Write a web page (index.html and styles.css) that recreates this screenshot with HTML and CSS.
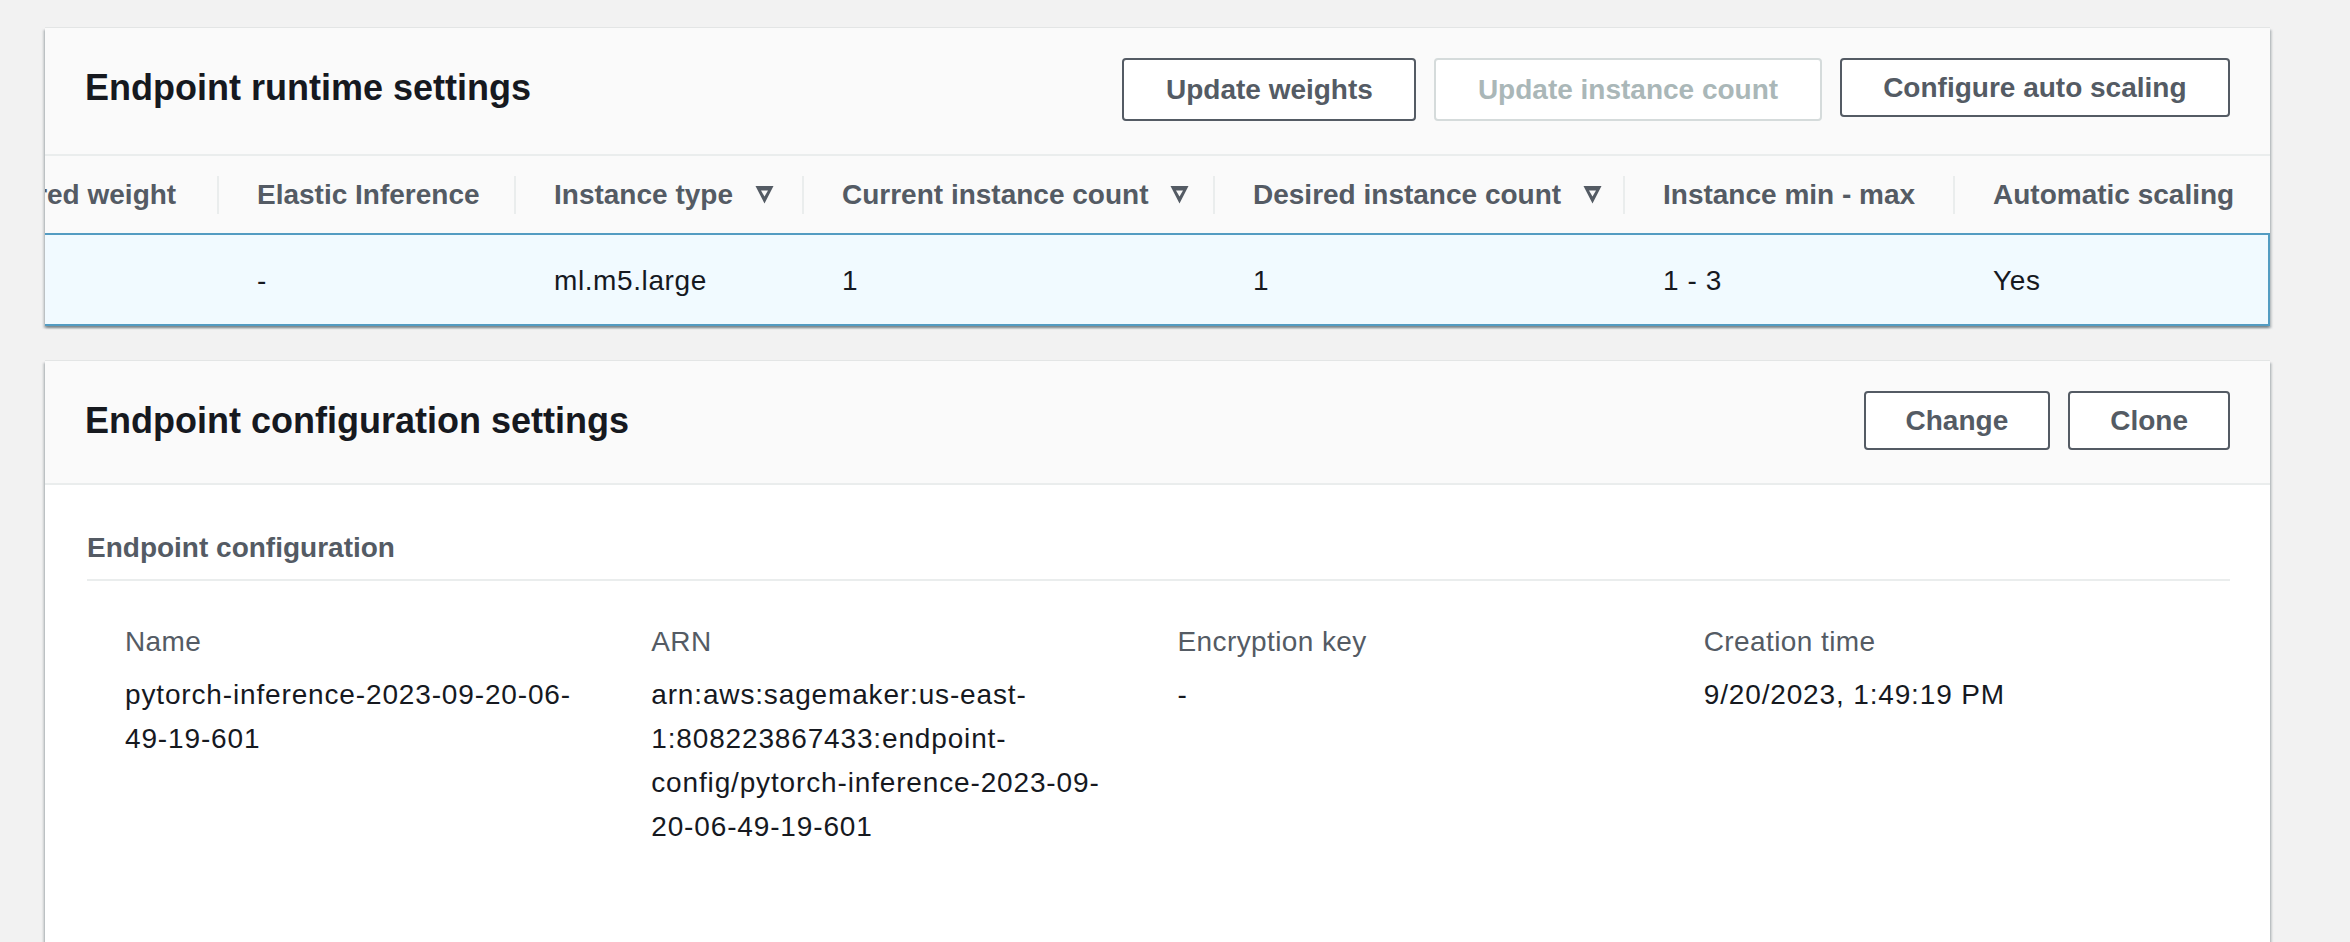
FILE: index.html
```html
<!DOCTYPE html>
<html lang="en">
<head>
<meta charset="utf-8">
<title>Endpoint settings</title>
<link rel="stylesheet" href="styles.css">
</head>
<body>
<div class="page">
  <section class="card">
    <header class="card-head">
      <h2 class="card-title">Endpoint runtime settings</h2>
      <div class="actions actions-wide">
        <button class="btn btn-tall" type="button">Update weights</button>
        <button class="btn btn-tall" type="button" disabled>Update instance count</button>
        <button class="btn" type="button">Configure auto scaling</button>
      </div>
    </header>
    <div class="table-scroll">
      <div class="table">
        <div class="thead">
          <div class="th first">Desired weight</div>
          <div class="th">Elastic Inference</div>
          <div class="th">Instance type
            <svg class="sort" viewBox="0 0 19 19" width="19" height="19" aria-hidden="true"><path fill-rule="evenodd" d="M0.5 1H18.5L9.5 18.5Z M6 5.5H13L9.5 11.5Z"/></svg>
          </div>
          <div class="th">Current instance count
            <svg class="sort" viewBox="0 0 19 19" width="19" height="19" aria-hidden="true"><path fill-rule="evenodd" d="M0.5 1H18.5L9.5 18.5Z M6 5.5H13L9.5 11.5Z"/></svg>
          </div>
          <div class="th">Desired instance count
            <svg class="sort" viewBox="0 0 19 19" width="19" height="19" aria-hidden="true"><path fill-rule="evenodd" d="M0.5 1H18.5L9.5 18.5Z M6 5.5H13L9.5 11.5Z"/></svg>
          </div>
          <div class="th">Instance min - max</div>
          <div class="th">Automatic scaling</div>
        </div>
        <div class="trow">
          <div class="td"></div>
          <div class="td">-</div>
          <div class="td">ml.m5.large</div>
          <div class="td">1</div>
          <div class="td">1</div>
          <div class="td">1 - 3</div>
          <div class="td">Yes</div>
        </div>
      </div>
    </div>
  </section>

  <section class="card card-config">
    <header class="card-head">
      <h2 class="card-title">Endpoint configuration settings</h2>
      <div class="actions">
        <button class="btn" type="button">Change</button>
        <button class="btn" type="button">Clone</button>
      </div>
    </header>
    <div class="card-body">
      <h3 class="sub-title">Endpoint configuration</h3>
      <div class="kv-grid">
        <div class="kv">
          <div class="kv-label">Name</div>
          <div class="kv-value">pytorch-inference-<wbr>2023-<wbr>09-<wbr>20-<wbr>06-<wbr>49-<wbr>19-<wbr>601</div>
        </div>
        <div class="kv">
          <div class="kv-label">ARN</div>
          <div class="kv-value">arn:aws:sagemaker:us-east-<wbr>1:808223867433:endpoint-<wbr>config/pytorch-<wbr>inference-<wbr>2023-<wbr>09-<wbr>20-<wbr>06-<wbr>49-<wbr>19-<wbr>601</div>
        </div>
        <div class="kv">
          <div class="kv-label">Encryption key</div>
          <div class="kv-value">-</div>
        </div>
        <div class="kv">
          <div class="kv-label">Creation time</div>
          <div class="kv-value">9/20/2023, 1:49:19 PM</div>
        </div>
      </div>
    </div>
  </section>
</div>
</body>
</html>
```

FILE: styles.css
```css
* {
  box-sizing: border-box;
}

html, body {
  margin: 0;
  padding: 0;
  background: #f2f2f2;
  font-family: "Liberation Sans", Arial, sans-serif;
  font-size: 28px;
  line-height: 44px;
  color: #16191f;
  overflow: hidden;
}

.page {
  width: 2225px;
  margin-left: 45px;
  padding-top: 28px;
}

.card {
  background: #ffffff;
  box-shadow: 0 2px 2px 0 rgba(0, 28, 36, 0.3),
              2px 2px 2px 0 rgba(0, 28, 36, 0.15),
              -2px 2px 2px 0 rgba(0, 28, 36, 0.15),
              0 -1px 0 0 rgba(0, 28, 36, 0.06);
}

.card-config {
  margin-top: 35px;
}

.card-head {
  display: flex;
  justify-content: space-between;
  align-items: flex-start;
  padding: 30px 40px 33px 40px;
  background: #fafafa;
  border-bottom: 2px solid #eaeded;
}

.card-title {
  margin: 8px 0 0 0;
  font-size: 36px;
  line-height: 44px;
  font-weight: 700;
  color: #16191f;
}

.actions {
  display: flex;
  align-items: flex-start;
  gap: 18px;
}

.btn {
  height: 59px;
  padding: 0 40px;
  border: 2px solid #545b64;
  border-radius: 4px;
  background: #ffffff;
  font-family: "Liberation Sans", Arial, sans-serif;
  font-size: 28px;
  font-weight: 700;
  color: #545b64;
  cursor: pointer;
}

.actions-wide .btn {
  padding: 0 41.5px;
}

.btn-tall {
  height: 63px;
}

.btn:disabled {
  border-color: #d5dbdb;
  color: #aab7b8;
  cursor: default;
}

/* table, scrolled horizontally so the first column is partly hidden */
.table-scroll {
  overflow: hidden;
}

.table {
  margin-left: -108px;
}

.thead,
.trow {
  display: grid;
  grid-template-columns: 280px 297px 288px 411px 410px 330px 1fr;
}

.thead {
  height: 77px;
  align-items: center;
  background: #fafafa;
}

.th {
  display: flex;
  align-items: center;
  gap: 22px;
  height: 38px;
  padding-left: 38px;
  border-left: 2px solid #eaeded;
  font-weight: 700;
  color: #545b64;
  white-space: nowrap;
}

.th.first {
  border-left: 0;
  padding-left: 40px;
}

.sort {
  flex: none;
  fill: #545b64;
}

.trow {
  background: #f1faff;
  border-top: 2px solid #539cc2;
  border-bottom: 2px solid #539cc2;
  border-right: 2px solid #539cc2;
}

.td {
  padding: 24px 0 21px 40px;
  line-height: 44px;
  letter-spacing: 0.6px;
  color: #16191f;
}

/* configuration card body */
.card-body {
  padding: 41px 40px 120px 42px;
}

.sub-title {
  margin: 0;
  padding-bottom: 9px;
  border-bottom: 2px solid #eaeded;
  font-size: 28px;
  line-height: 44px;
  font-weight: 700;
  color: #545b64;
}

.kv-grid {
  display: grid;
  grid-template-columns: repeat(4, 1fr);
  padding-left: 38px;
  margin-top: 39px;
}

.kv {
  padding-right: 61px;
}

.kv-label {
  color: #545b64;
  letter-spacing: 0.4px;
  margin-bottom: 9px;
}

.kv-value {
  color: #16191f;
  letter-spacing: 0.85px;
}
```
